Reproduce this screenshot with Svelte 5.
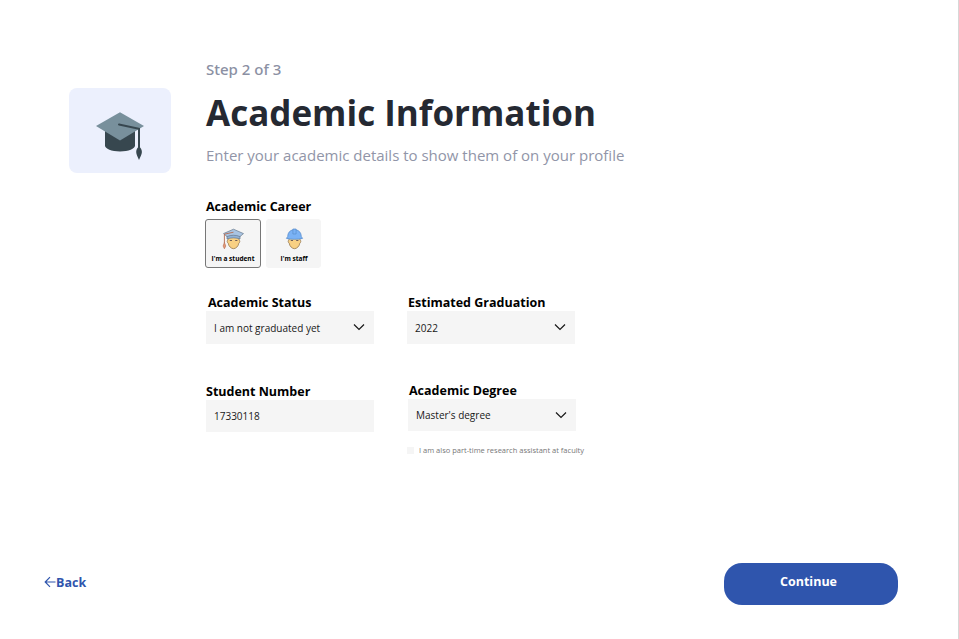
<script>
  let career = $state('student');
</script>

{#snippet chevron()}
  <svg class="chevron" width="12" height="8" viewBox="0 0 12 8" aria-hidden="true">
    <path d="M1 1.500 L6 6.500 L11 1.500" fill="none" stroke="#171717" stroke-width="1.200" />
  </svg>
{/snippet}

{#snippet face()}
  <path d="M6 8h11v4c1.200.2 1 2.600-.2 3.200-.3 3-3 5.500-5.300 5.500s-5-2.500-5.300-5.500C5 14.600 4.800 12.200 6 12z" fill="#f8d083" stroke="#8a6d48" stroke-width=".7" />
  <path d="M7.800 12.500h2.200M13.200 12.500h2.200" stroke="#715e56" stroke-width="1.200" />
{/snippet}

<main>
  <div class="content">
    <div class="badge">
      <svg width="50" height="50" viewBox="0 0 50 50" aria-hidden="true">
        <path d="M10 20v17.500c0 3.200 6.500 6 15 6s15-2.800 15-6V20z" fill="#37474f" />
        <path d="M25 4.300 49 18 25 32.500 1 18z" fill="#78909c" />
        <path d="M24 16.500 44 20.700V41" fill="none" stroke="#37474f" stroke-width="2" stroke-linecap="round" />
        <path d="M44 38.500c-1.600 1.400-2.800 3-2.800 5.500 0 2.600 1.500 4.500 2.800 8 1.300-3.500 2.900-5.400 2.900-8 0-2.500-1.300-4.100-2.900-5.500z" fill="#37474f" />
      </svg>
    </div>
    <div class="form">
      <p class="step"><span>Step 2 of 3</span></p>
      <h1><span>Academic Information</span></h1>
      <p class="intro"><span>Enter your academic details to show them of on your profile</span></p>

      <h2 class="career-label"><span>Academic Career</span></h2>
      <div class="careers">
        <button class="career" class:selected={career === 'student'} onclick={() => (career = 'student')}>
          <svg width="23" height="22" viewBox="0 0 23 22" aria-hidden="true">
            {@render face()}
            <path d="M5 6v5c3.500-1.500 9.500-1.500 13 0V6z" fill="#91b1d5" stroke="#66788c" stroke-width=".7" />
            <path d="M11.500 1.200 21.500 5.600 18 8.600C14 6.800 9 6.800 5 8.600L1.500 5.600z" fill="#a9c4e2" stroke="#66788c" stroke-width=".7" />
            <path d="M11.500 4.200 2.400 6.200v9" fill="none" stroke="#b56b50" stroke-width=".9" />
            <path d="M2.400 14.500 1.100 18 2.400 20.800 3.800 18z" fill="#e39a77" stroke="#b56b50" stroke-width=".6" />
          </svg>
          <span>I'm a student</span>
        </button>
        <button class="career staff" class:selected={career === 'staff'} onclick={() => (career = 'staff')}>
          <svg width="23" height="22" viewBox="0 0 23 22" aria-hidden="true">
            {@render face()}
            <path d="M4.700 8.500C4.700 4.500 7.200 2.400 9.900 1.800V1h3.200v.8c2.700.6 5.200 2.700 5.200 6.700l1.300 1.900c-4.700 1.200-11.500 1.200-16.200 0z" fill="#7ab2f5" stroke="#568ac8" stroke-width=".7" />
            <path d="M9.900 1.800V6h3.200V1.800" fill="none" stroke="#568ac8" stroke-width=".6" />
          </svg>
          <span>I'm staff</span>
        </button>
      </div>

      <div class="fields">
        <div class="column">
          <div class="field status">
            <h2><span>Academic Status</span></h2>
            <div class="control"><span>I am not graduated yet</span>{@render chevron()}</div>
          </div>
          <div class="field number">
            <h2><span>Student Number</span></h2>
            <div class="control"><span>17330118</span></div>
          </div>
        </div>
        <div class="column">
          <div class="field graduation">
            <h2><span>Estimated Graduation</span></h2>
            <div class="control"><span>2022</span>{@render chevron()}</div>
          </div>
          <div class="field degree">
            <h2><span>Academic Degree</span></h2>
            <div class="control"><span>Master's degree</span>{@render chevron()}</div>
          </div>
          <label class="assistant"><i></i><span>I am also part-time research assistant at faculty</span></label>
        </div>
      </div>
    </div>
  </div>

  <footer>
    <button class="back">
      <svg width="12" height="12" viewBox="0 0 12 12" aria-hidden="true">
        <path d="M11.500 6H1.500M6 1.200 1.200 6 6 10.800" fill="none" stroke="#2f55ad" stroke-width="1.200" />
      </svg>
      <span>Back</span>
    </button>
    <button class="continue"><span>Continue</span></button>
  </footer>
</main>

<style>
  :global(body) { margin: 0; background: #fff; }
  main {
    box-sizing: border-box;
    width: 959px;
    height: 639px;
    border-right: 1px solid #d7d7d7;
    display: flex;
    flex-direction: column;
    justify-content: space-between;
    overflow: hidden;
    background: #fff;
    font-family: "Open Sans", "Noto Sans", sans-serif;
    color: #000;
  }
  p, h1, h2 { margin: 0; white-space: nowrap; }
  button { font: inherit; border: 0; padding: 0; margin: 0; cursor: pointer; }
  svg { display: block; flex: none; }

  .content { display: flex; padding: 59px 0 0 69px; }
  .badge {
    width: 102px;
    height: 85px;
    margin: 29.400px 35px 0 0;
    border-radius: 8px;
    background: #ecf0fd;
    display: flex;
    align-items: center;
    justify-content: center;
    flex: none;
  }
  .badge svg { overflow: visible; margin: 4px 0 0 0; }

  .step { font-family: "Noto Sans", "Open Sans", sans-serif; font-size: 15px; line-height: 20px; font-weight: 500; color: #8b90a3; }
  h1 { font-size: 35px; line-height: 50px; margin-top: 9px; font-weight: 700; color: #252932; }
  .intro { font-size: 15px; line-height: 20px; margin-top: 7px; font-weight: 400; color: #9195a8; }
  h2 { font-size: 12.500px; line-height: 16px; padding-top: 2px; font-weight: 700; }
  .career-label { margin-top: 32px; }

  .careers { display: flex; gap: 5px; margin: 4px 0 0 -1px; }
  .career {
    box-sizing: border-box;
    width: 56px;
    height: 49px;
    border: 1px solid #f5f5f5;
    border-radius: 3px;
    background: #f5f5f5;
    display: flex;
    flex-direction: column;
    align-items: center;
    padding-top: 8px;
    font-size: 6.500px;
    line-height: 10px;
    font-weight: 700;
    color: #000;
    white-space: nowrap;
  }
  .career.selected { border-color: #777; }
  .career.staff { width: 55px; padding-left: 1px; }
  .career span { margin-top: 4px; }

  .fields { display: flex; gap: 33px; margin-top: 25px; }
  .column { width: 168px; }
  .control {
    box-sizing: border-box;
    width: 168px;
    height: 33px;
    padding: 0 9px 0 8px;
    background: #f5f5f5;
    display: flex;
    align-items: center;
    justify-content: space-between;
    font-size: 10px;
    color: #181818;
    white-space: nowrap;
  }
  .chevron { margin-top: -1px; }
  .status h2 { margin-left: 2px; }
  .graduation h2 { margin-left: 1px; }
  .number { margin-top: 38px; }
  .number .control { margin-left: .4px; height: 32px; padding-left: 7.600px; }
  .degree { margin: 37px 0 0 1px; }
  .degree h2 { margin-left: 1px; }
  .degree .control { height: 32px; }
  .assistant {
    display: flex;
    align-items: center;
    gap: 5px;
    margin-top: 14px;
    font-size: 7.500px;
    line-height: 10px;
    color: #777;
    white-space: nowrap;
  }
  .assistant i { width: 7px; height: 7px; background: #f5f5f5; flex: none; }

  footer { display: flex; justify-content: space-between; padding: 0 60px 34px 44px; }
  .back {
    display: flex;
    align-items: center;
    height: 38px;
    background: none;
    font-size: 12.500px;
    font-weight: 700;
    color: #2f55ad;
  }
  .back svg { margin-top: -1px; }
  .continue {
    width: 174px;
    height: 42px;
    border-radius: 18px;
    background: #2f55ad;
    color: #fff;
    font-size: 12.500px;
    line-height: 18px;
    font-weight: 700;
    padding: 0 5px 4px 0;
  }
</style>
